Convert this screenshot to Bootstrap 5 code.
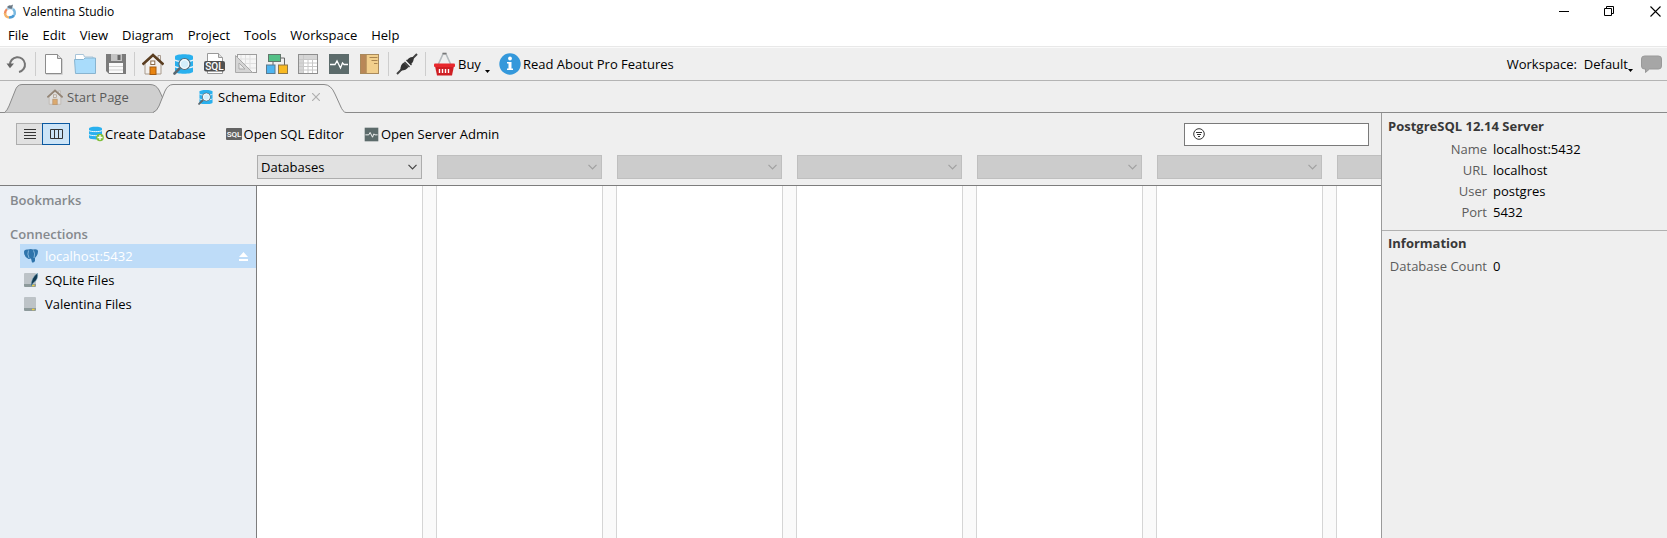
<!DOCTYPE html>
<html lang="en">
<head>
<meta charset="utf-8">
<meta name="viewport" content="width=device-width, initial-scale=1">
<title>Valentina Studio</title>
<link href="https://cdn.jsdelivr.net/npm/bootstrap@5.3.0/dist/css/bootstrap.min.css" rel="stylesheet">
<style>
  body { font-family: "Open Sans", "Noto Sans", sans-serif; font-size: 13px; line-height: 20px; color: #000; background: #efefef; }
  button, input, select { font: inherit; color: inherit; }
  svg { display: block; flex: none; }
  .title-strip { height: 24px; background: #fff; font-size: 12px; padding-left: 3px; padding-bottom: 1px; gap: 6px; }
  .win-btn, .tool-btn, .text-btn, .tab-close { border: 0; background: none; padding: 0; }
  .win-btn { width: 45px; height: 22px; display: flex; align-items: center; justify-content: center; }
  .win-btn:last-child { width: 35px; padding-left: 11px; }
  .menu-strip { height: 23px; background: #fff; border-bottom: 1px solid #e8e8e8; padding-left: 1px; }
  .menu-strip a { color: #000; text-decoration: none; padding: 0 7px; line-height: 23px; }
  .tool-strip { height: 34px; border-top: 1px solid #fafafa; border-bottom: 1px solid #b4b4b4; padding-left: 1px; }
  .tool-btn { width: 31px; height: 30px; display: flex; align-items: center; justify-content: center; }
  .rule { width: 1px; height: 24px; background: #cdcdcd; margin: 0 2px 0 3px; }
  .text-btn { display: flex; align-items: center; white-space: nowrap; }
  .icon-gap { gap: 2px; }
  .tab-strip { height: 32px; border-bottom: 1px solid #8a8a8a; padding-left: 5px; }
  .page-tab { position: relative; height: 29px; margin-bottom: -1px; padding-bottom: 3px; color: #000; text-decoration: none; }
  .page-tab > .shape { position: absolute; left: 0; top: 0; }
  .page-tab > span, .page-tab > .pic { position: relative; }
  .tab-start { width: 166px; color: #5a5a5a; padding-left: 42px; }
  .tab-schema { width: 193px; margin-left: -18px; padding-left: 45px; }
  .tab-close { margin-left: 6px; }
  .action-strip { height: 42px; padding: 0 12px 0 16px; }
  .seg button { width: 26px; height: 22px; border: 1px solid #adadad; background: #e1e1e1; padding: 0; display: flex; align-items: center; justify-content: center; }
  .seg button.on { border-color: #0a58a0; background: #cce4f7; width: 28px; }
  .seg button:first-child { border-right: 0; }
  .actions { margin-left: 18px; gap: 20px; }
  .filter-box { width: 185px; height: 23px; border: 1px solid #7a7a7a; background: #fff; padding-left: 8px; }
  .filter-box input { border: 0; outline: 0; background: none; min-width: 0; width: 100%; padding: 0 4px; }
  .picker-strip { height: 31px; padding-left: 257px; gap: 15px; overflow: hidden; border-bottom: 1px solid #7d7d7d; }
  .picker { flex: none; width: 165px; height: 24px; border: 1px solid #adadad; border-radius: 0; padding: 0 3px; appearance: none; color: #000;
    background: #e1e1e1 url("data:image/svg+xml,%3Csvg xmlns='http://www.w3.org/2000/svg' width='9' height='6'%3E%3Cpath d='M.5 .8l4 4 4-4' fill='none' stroke='%23444' stroke-width='1.2'/%3E%3C/svg%3E") no-repeat right 4px center; }
  .picker:disabled { opacity: 1; border-color: #bfbfbf;
    background: #ccc url("data:image/svg+xml,%3Csvg xmlns='http://www.w3.org/2000/svg' width='9' height='6'%3E%3Cpath d='M.5 .8l4 4 4-4' fill='none' stroke='%23a0a0a0' stroke-width='1.2'/%3E%3C/svg%3E") no-repeat right 4px center; }
  .side-list { width: 256px; flex: none; background: #ebeff4; padding-top: 4px; }
  .side-list h2 { font-size: 13px; line-height: 20px; font-weight: 600; color: #85898d; margin: 0 0 14px; padding-left: 10px; }
  .side-list h2.tight { margin-bottom: 0; }
  .side-list ul { margin: 0 0 0 20px; }
  .side-list a { display: flex; align-items: center; height: 24px; padding-left: 4px; gap: 5px; color: #000; text-decoration: none; }
  .side-list a.on { background: #bedcf8; color: #fff; }
  .columns-view { background: #fafafa; gap: 13px; border-left: 1px solid #7d7d7d; overflow: hidden; }
  .column-pane { flex: none; width: 167px; background: #fff; border: solid #d5d5d5; border-width: 0 1px; }
  .column-pane:first-child { width: 166px; border-left: 0; }
  .info-pane { width: 286px; flex: none; border-left: 1px solid #9a9a9a; }
  .info-pane section { padding: 3px 0 0 6px; }
  .info-pane section + section { border-top: 1px solid #b0b0b0; margin-top: 7px; padding-top: 2px; }
  .info-pane h2 { font-size: 13px; line-height: 20px; font-weight: 700; color: #383838; margin: 0 0 3px; }
  .info-pane th { width: 105px; padding: 0 6px 0 0; text-align: right; font-weight: 400; color: #5c5c5c; line-height: 21px; }
  .info-pane td { padding: 0; line-height: 21px; }
</style>
</head>
<body class="vh-100 d-flex flex-column overflow-hidden">

<svg width="0" height="0" class="position-absolute" aria-hidden="true">
  <symbol id="home" viewBox="0 0 22 22">
    <path d="M3 10L11 3l8 7v11H3z" fill="#f2f0ee" stroke="#a99b8c"/>
    <path d="M16 2.500h2.500V8L16 6z" fill="#eee" stroke="#99897a" stroke-width=".8"/>
    <path d="M.5 11.500L11 2l10.500 9.500" fill="none" stroke="#5a3d20" stroke-width="2.600"/>
    <rect x="8.800" y="8" width="4" height="3.500" fill="#fff" stroke="#8a6a48"/>
    <rect x="8" y="14" width="6" height="7.500" fill="#e88410" stroke="#a55c10"/>
  </symbol>
  <symbol id="schema" viewBox="0 0 22 22">
    <path d="M2 3.500C2 .5 20 .5 20 3.500v15c0 3-18 3-18 0z" fill="#29b0ee"/>
    <path d="M2 7c2 2 16 2 18 0M2 13.500c2 2 16 2 18 0" fill="none" stroke="#e8f4fb" stroke-width="1.300"/>
    <path d="M1.500 20.500l5-5" stroke="#5a6870" stroke-width="2.600" stroke-linecap="round"/>
    <circle cx="11.500" cy="11" r="5.500" fill="#d4eefa" stroke="#576c78" stroke-width="1.200"/>
    <circle cx="11.500" cy="11" r="4.300" fill="none" stroke="#fff"/>
  </symbol>
  <symbol id="pulse" viewBox="0 0 22 22">
    <rect x="1" y="1" width="20" height="20" fill="#5c6b6b"/>
    <path d="M2 11.500h5l2-3.500 3.500 7 2-5 1.500 1.500h4" fill="none" stroke="#fff" stroke-width="1.300"/>
  </symbol>
  <symbol id="drive" viewBox="0 0 14 14">
    <path d="M0 1q0-1 1-1h10q1 0 1 1v11H0z" fill="#bdc3c7"/>
    <path d="M0 11h12v2q0 1-1 1H1q-1 0-1-1z" fill="#8d9a9b"/>
    <path d="M8 12.500h2.500" stroke="#f2d03c" stroke-width="1.400"/>
  </symbol>
</svg>

<header>
  <div class="title-strip d-flex align-items-center">
    <svg width="14" height="16" viewBox="0 0 14 16"><g fill="none" stroke-width="2.400"><path d="M4 5Q2 7 2 10" stroke="#f08a5c"/><path d="M2 9q0 4 4 4.500" stroke="#f4b36a"/><path d="M6 13.500q4 0 5-2.500" stroke="#4b9bd4"/><path d="M11.500 11q1-4-1.500-6" stroke="#78b8e0"/><path d="M4 5q3-2 6 0" stroke="#a9cce4"/></g><path d="M4 3q2-2.500 4-1.500l2-1-1 4q-2 1-5-1.500z" fill="#697783"/></svg>
    <span>Valentina Studio</span>
    <div class="d-flex ms-auto">
      <button class="win-btn" aria-label="Minimize"><svg width="11" height="11"><path d="M0 5.500h10" stroke="#000"/></svg></button>
      <button class="win-btn" aria-label="Restore"><svg width="11" height="11"><path d="M.5 2.500h7v7h-7zM2.500 2.500v-2h7v7h-2" fill="none" stroke="#000"/></svg></button>
      <button class="win-btn" aria-label="Close"><svg width="11" height="11"><path d="M.5 .5l10 10M10.500 .5l-10 10" stroke="#000" stroke-width="1.100"/></svg></button>
    </div>
  </div>

  <nav class="menu-strip d-flex" aria-label="Main menu">
    <a href="#">File</a><a href="#">Edit</a><a href="#">View</a><a href="#">Diagram</a><a href="#">Project</a><a href="#">Tools</a><a href="#">Workspace</a><a href="#">Help</a>
  </nav>

  <div class="tool-strip d-flex align-items-center">
    <button class="tool-btn" aria-label="Undo"><svg width="22" height="22" viewBox="0 0 22 22"><path d="M4 12a7.500 7.500 0 1 1 9 7" fill="none" stroke="#757575" stroke-width="2"/><path d="M.5 10.500h7.500l-4 4.800z" fill="#666"/></svg></button>
    <span class="rule"></span>
    <button class="tool-btn" aria-label="New"><svg width="22" height="22" viewBox="0 0 22 22"><path d="M2.500 1.500h12l4 4v15h-16z" fill="#fff" stroke="#8c8c8c"/><path d="M14.500 1.500v4h4" fill="#ddd" stroke="#8c8c8c"/><path d="M3 21.500h16.500V6" fill="none" stroke="#d2d2d2"/></svg></button>
    <button class="tool-btn" aria-label="Open"><svg width="22" height="22" viewBox="0 0 22 22"><path d="M1.500 6V1.500h8l1 2.500h8.500v4" fill="#fff" stroke="#a8c4d8"/><path d="M.5 6.500h9l1.500-1.500h10.500v15.500h-20z" fill="#a9dcfb" stroke="#88b4d0"/></svg></button>
    <button class="tool-btn" aria-label="Save"><svg width="22" height="22" viewBox="0 0 22 22"><path d="M1 1h20v20H4l-3-3z" fill="#7b7b7b"/><rect x="6" y="1" width="11" height="7" fill="#c4c4c4"/><rect x="12.500" y="2" width="3" height="5" fill="#666"/><rect x="4" y="10" width="14" height="10" fill="#fafafa"/><path d="M4 13.500h14M4 17h14" stroke="#d0d0d0"/></svg></button>
    <span class="rule"></span>
    <button class="tool-btn" aria-label="Start Page"><svg width="22" height="22"><use href="#home"/></svg></button>
    <button class="tool-btn" aria-label="Schema Editor"><svg width="22" height="22"><use href="#schema"/></svg></button>
    <button class="tool-btn" aria-label="SQL Editor"><svg width="22" height="22" viewBox="0 0 22 22"><path d="M3.500 .5h11l4 4v16h-15z" fill="#fff" stroke="#999"/><path d="M14.500 .5v4h4" fill="#ddd" stroke="#999"/><rect x="0" y="8" width="21" height="10.500" rx="2" fill="#505050"/><text x="10.500" y="16.800" text-anchor="middle" font-family="Roboto, sans-serif" font-size="10" font-weight="500" fill="#fff">SQL</text></svg></button>
    <button class="tool-btn" aria-label="Form Editor"><svg width="22" height="22" viewBox="0 0 22 22"><rect x="2.500" y="1.500" width="19" height="18" fill="#f6f6f6" stroke="#9d9d9d"/><path d="M6 2v17M10.500 2v17M15 2v17M3 6h18M3 10.500h18M3 15h18" stroke="#e0e0e0"/><path d="M.5 2.500v17h17zM4 10v6h6z" fill="#d4d4d4" fill-rule="evenodd" stroke="#aaa"/></svg></button>
    <button class="tool-btn" aria-label="Diagram Editor"><svg width="22" height="22" viewBox="0 0 22 22"><path d="M13 5h5.500v7M7 8v4" fill="none" stroke="#666"/><rect x="2.500" y="1.500" width="12" height="7" fill="#54c087" stroke="#61766b"/><rect x=".5" y="12" width="8.500" height="8.500" fill="#4db4f0" stroke="#5b7a8d"/><rect x="12.500" y="12" width="9" height="8.500" fill="#f8b921" stroke="#8d7748"/></svg></button>
    <button class="tool-btn" aria-label="Data Editor"><svg width="22" height="22" viewBox="0 0 22 22"><rect x="1.500" y="1.500" width="19" height="19" fill="#fff" stroke="#8e8e8e"/><path d="M2 2h18v4H6.500v14H2z" fill="#d5d5d5"/><path d="M6.500 2v18M11 6v14M15.500 6v14M2 6.500h18M2 10h18M2 13.500h18M2 17h18" stroke="#c8c8c8"/></svg></button>
    <button class="tool-btn" aria-label="Server Admin"><svg width="22" height="22"><use href="#pulse"/></svg></button>
    <button class="tool-btn" aria-label="Reports"><svg width="22" height="22" viewBox="0 0 22 22"><rect x="1.500" y="1.500" width="18" height="19" fill="#f2cf8c" stroke="#a98a5c"/><path d="M2 2h4.500v18H2z" fill="#b98757"/><path d="M7 2v18" stroke="#93683f"/><path d="M10.500 4.500h8M12.500 7.500h6M15 10.500h3.500" stroke="#a98450"/></svg></button>
    <span class="rule"></span>
    <button class="tool-btn" aria-label="Connect"><svg width="22" height="22" viewBox="0 0 22 22"><path d="M1 21l6-6M15 7l6-6" stroke="#444" stroke-width="2"/><path d="M4.500 17.500q-.5-6 3.500-8l4.500 4.500q-3 4-8 3.500z" fill="#333"/><path d="M11 7.500q2-4 6.500-3.500 1 5-3 7.500z" fill="#333"/><path d="M8.500 9l5 5M10.500 7l5 5" stroke="#333" stroke-width="1.300"/></svg></button>
    <span class="rule"></span>
    <button class="text-btn ms-1"><svg width="26" height="24" viewBox="0 0 26 24"><path d="M6 13l5-11h3l5 11" fill="none" stroke="#b4babd" stroke-width="1.600"/><path d="M10.500 1.500h4" stroke="#777" stroke-width="1.600"/><path d="M3 14h19l-2 9.500H5z" fill="#cf1f24"/><rect x="2" y="11.500" width="21" height="3.500" rx="1" fill="#e8282c"/><path d="M7.500 17v4M10.500 17v4M13.500 17v4M16.500 17v4" stroke="#fff" stroke-width="1.400"/></svg>Buy<svg width="6" height="20" class="ms-1"><path d="M0 16h5l-2.500 3z"/></svg></button>
    <button class="text-btn icon-gap ms-2"><svg width="22" height="22" viewBox="0 0 22 22"><circle cx="11" cy="11" r="10.700" fill="#3498db"/><circle cx="11" cy="5.500" r="1.900" fill="#fff"/><path d="M8 9h4.500v6.500H14v1.500H8v-1.500h1.500v-5H8z" fill="#fff"/></svg>Read About Pro Features</button>
    <button class="text-btn ms-auto me-2">Workspace:&nbsp; Default<svg width="5" height="18"><path d="M0 14h5l-2.500 3z"/></svg></button>
    <button class="text-btn me-1" aria-label="Messages"><svg width="22" height="18" viewBox="0 0 22 18"><path d="M3.500 1h14q3 0 3 3v7q0 3-3 3H8.500l-4 3.500V14H3.500q-3 0-3-3V4q0-3 3-3z" fill="#a6a6a6" stroke="#999"/></svg></button>
  </div>

  <nav class="tab-strip d-flex align-items-end" aria-label="Open pages">
    <a href="#" class="page-tab tab-start d-flex align-items-center">
      <svg class="shape" width="166" height="29" viewBox="0 0 166 29"><path d="M-1 28.500Q2 27.500 4 22L10 7Q12 .5 17 .5H145Q151 .5 154 6L162 23Q164 28.500 168 28.500" fill="#cfcfcf" stroke="#8a8a8a"/></svg>
      <svg class="pic me-1 opacity-50" width="16" height="16"><use href="#home"/></svg><span>Start Page</span>
    </a>
    <a href="#" class="page-tab tab-schema d-flex align-items-center" aria-current="page">
      <svg class="shape" width="193" height="29" viewBox="0 0 193 29"><path d="M0 29Q4 27 6 22L12 7Q15 .5 20 .5H171Q178 .5 182 10L187 21Q190 28.500 193 28.500V29z" fill="#efefef"/><path d="M0 28.500Q4 27 6 22L12 7Q15 .5 20 .5H171Q178 .5 182 10L187 21Q190 28.500 193 28.500" fill="none" stroke="#8a8a8a"/></svg>
      <svg class="pic me-1" width="16" height="16"><use href="#schema"/></svg><span>Schema Editor</span>
      <span class="tab-close" aria-hidden="true"><svg width="8" height="8"><path d="M0 0l8 8M8 0l-8 8" stroke="#b0b0b0" stroke-width="1.200"/></svg></span>
    </a>
  </nav>
</header>

<div class="d-flex flex-grow-1 overflow-hidden">
  <main class="d-flex flex-column flex-grow-1 overflow-hidden">
    <div class="action-strip d-flex align-items-center">
      <div class="seg d-flex">
        <button aria-label="List view"><svg width="12" height="11"><path d="M0 .5h12M0 3.500h12M0 6.500h12M0 9.500h12" stroke="#333"/></svg></button>
        <button class="on" aria-label="Column view"><svg width="13" height="10"><path d="M.5 .5h12v9H.5zM4.500 0v10M8.500 0v10" fill="none" stroke="#333"/></svg></button>
      </div>
      <div class="actions d-flex">
        <button class="text-btn"><svg width="17" height="16" viewBox="0 0 17 16"><path d="M1 2.500C1 0 14 0 14 2.500v9c0 2.500-13 2.500-13 0z" fill="#29b0ee"/><path d="M1 4.500c1 1.500 12 1.500 13 0M1 8.500c1 1.500 12 1.500 13 0" fill="none" stroke="#eef8fd"/><circle cx="12" cy="11.500" r="3.800" fill="#80bf3c"/><path d="M12 9v5M9.500 11.500h5" stroke="#fff" stroke-width="1.300"/></svg>Create Database</button>
        <button class="text-btn icon-gap"><svg width="16" height="14" viewBox="0 0 16 14"><rect x="0" y="1" width="16" height="12" rx="1" fill="#636363"/><text x="8" y="10" text-anchor="middle" font-family="Roboto, sans-serif" font-size="8" font-weight="500" fill="#fff">SQL</text></svg>Open SQL Editor</button>
        <button class="text-btn icon-gap"><svg width="15" height="15"><use href="#pulse"/></svg>Open Server Admin</button>
      </div>
      <label class="filter-box d-flex align-items-center ms-auto"><svg width="12" height="12"><circle cx="6" cy="6" r="5.300" fill="none" stroke="#333"/><path d="M3 4.500h6M4 6.500h4M5 8.500h2" stroke="#333"/></svg><input type="text" aria-label="Filter"></label>
    </div>
    <div class="picker-strip d-flex">
      <select class="picker" aria-label="Column 1"><option>Databases</option></select>
      <select class="picker" aria-label="Column 2" disabled></select>
      <select class="picker" aria-label="Column 3" disabled></select>
      <select class="picker" aria-label="Column 4" disabled></select>
      <select class="picker" aria-label="Column 5" disabled></select>
      <select class="picker" aria-label="Column 6" disabled></select>
      <select class="picker" aria-label="Column 7" disabled></select>
    </div>
    <div class="d-flex flex-grow-1 overflow-hidden">
      <aside class="side-list">
        <h2>Bookmarks</h2>
        <h2 class="tight">Connections</h2>
        <ul class="list-unstyled">
          <li><a href="#" class="on"><svg width="16" height="14" viewBox="0 0 16 14"><path d="M0 3Q0 0 4 .5q3-1 5 0 5-1 5 2 0 3-2.500 6H11V12q-1 2-3 1.500L7 9.500 4.500 10Q0 8 0 3z" fill="#2f74ab"/><path d="M4.500 1.500Q3 5 5 9M9.500 1.500q2 3 .5 7.500" fill="none" stroke="#9cc6e6" stroke-width=".8"/></svg><span>localhost:5432</span><svg width="9" height="9" class="ms-auto me-2"><path d="M4.500 0L9 5H0zM0 7h9v2H0z" fill="#fff"/></svg></a></li>
          <li><a href="#"><svg width="16" height="14" viewBox="0 0 16 14"><use href="#drive" width="14" height="14"/><path d="M7 13q0-8 6.500-13 1 6-3 9-1.500.5-3 4z" fill="#123a52" stroke="#7fb3cc" stroke-width=".5"/></svg><span>SQLite Files</span></a></li>
          <li><a href="#"><svg width="16" height="14" viewBox="0 0 16 14"><use href="#drive" width="14" height="14"/></svg><span>Valentina Files</span></a></li>
        </ul>
      </aside>
      <div class="columns-view d-flex flex-grow-1">
        <div class="column-pane"></div><div class="column-pane"></div><div class="column-pane"></div><div class="column-pane"></div><div class="column-pane"></div><div class="column-pane"></div><div class="column-pane"></div>
      </div>
    </div>
  </main>

  <aside class="info-pane">
    <section>
      <h2>PostgreSQL 12.14 Server</h2>
      <table>
        <tr><th scope="row">Name</th><td>localhost:5432</td></tr>
        <tr><th scope="row">URL</th><td>localhost</td></tr>
        <tr><th scope="row">User</th><td>postgres</td></tr>
        <tr><th scope="row">Port</th><td>5432</td></tr>
      </table>
    </section>
    <section>
      <h2>Information</h2>
      <table>
        <tr><th scope="row">Database Count</th><td>0</td></tr>
      </table>
    </section>
  </aside>
</div>
<script src="https://cdn.jsdelivr.net/npm/bootstrap@5.3.0/dist/js/bootstrap.bundle.min.js"></script>
</body>
</html>
